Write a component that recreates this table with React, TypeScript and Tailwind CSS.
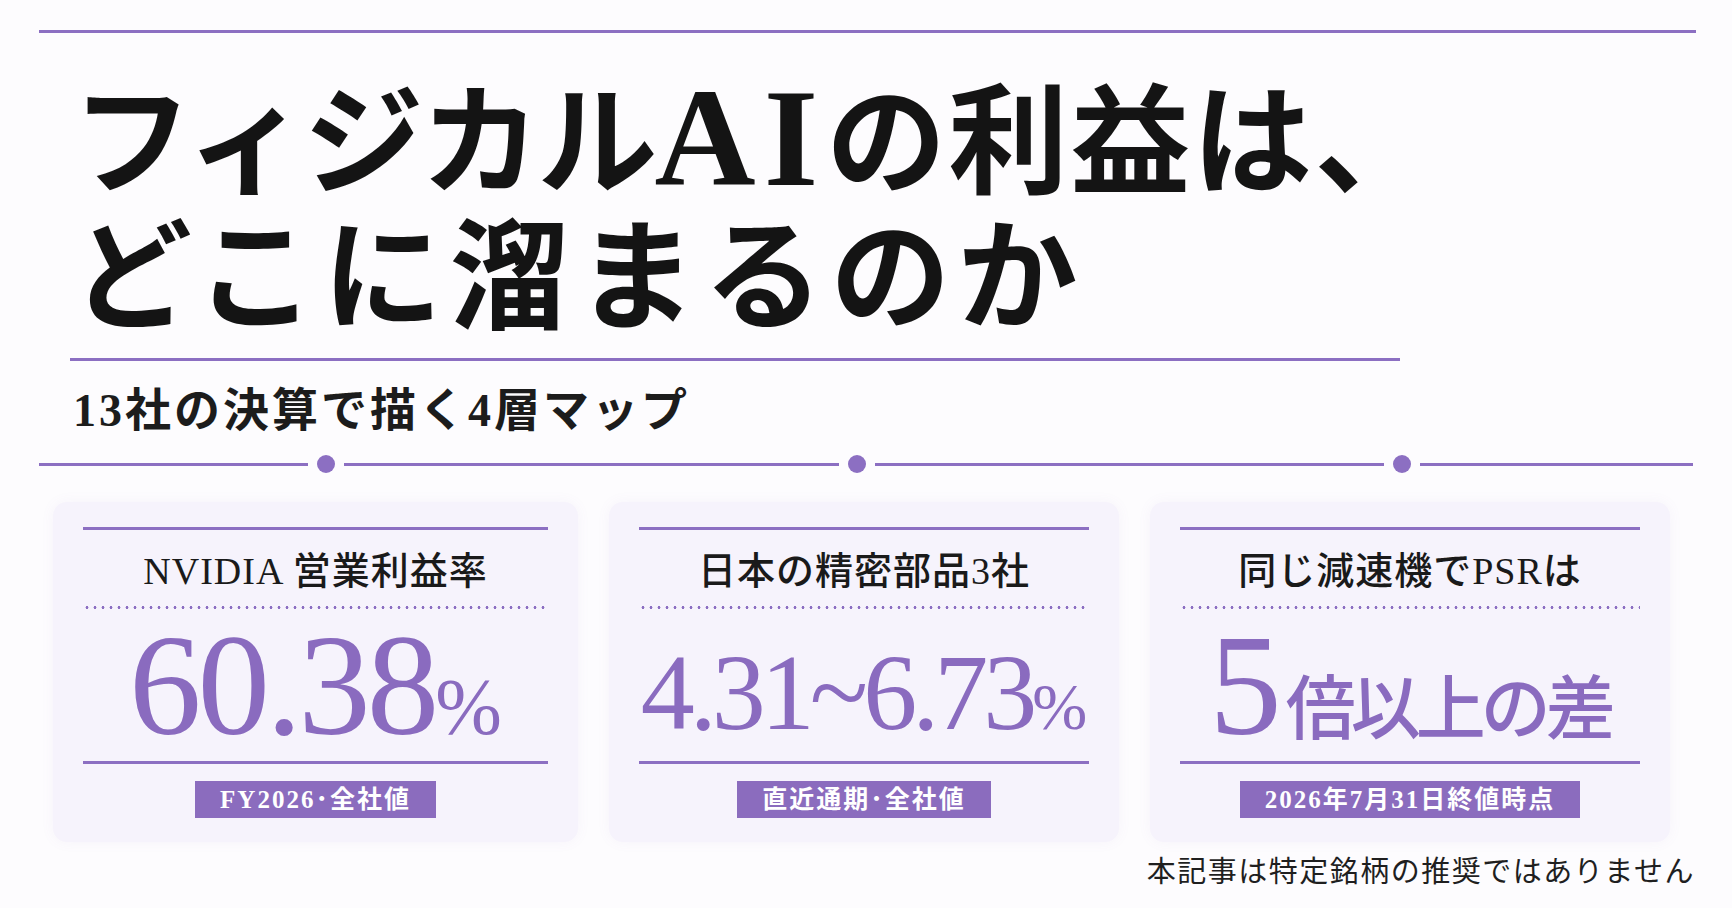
type CardProps = {
  title: React.ReactNode;
  value: React.ReactNode;
  badge: string;
  valueClass: string;
};

function StatCard({ title, value, badge, valueClass }: CardProps) {
  return (
    <div className="flex flex-col rounded-[14px] bg-[#f6f3fc] px-[30px] pb-[24px] pt-[25px] shadow-[0_0_14px_rgba(140,110,195,0.06)]">
      <div className="h-[3px] bg-[#8c6fc2]" />
      <div className="mt-[19px] text-center text-[38px] font-medium leading-[44px] tracking-[1px] text-[#1a1a1a]">
        {title}
      </div>
      <div className="mt-[13px] h-[3px] bg-[radial-gradient(circle,#8c6fc2_1.2px,transparent_1.7px)] bg-[length:8px_3px] bg-repeat-x" />
      <div className={`flex h-[152px] items-center justify-center text-[#8a6bbf] ${valueClass}`}>
        {value}
      </div>
      <div className="h-[3px] bg-[#8c6fc2]" />
      <div className="mt-[17px] flex justify-center">
        <span className="h-[37px] bg-[#8b6cbe] px-[25px] text-[25px] font-bold leading-[37px] tracking-[2px] text-white">
          {badge}
        </span>
      </div>
    </div>
  );
}

export default function App() {
  return (
    <div className="min-h-[908px] w-full overflow-hidden bg-[#fdfcfe] pb-[20px] text-[#141414] [font-family:'Liberation_Serif','Noto_Sans_CJK_JP',serif]">
      <div className="ml-[39px] mt-[30px] h-[3px] w-[1657px] bg-[#8c6fc2]" />

      <h1 className="ml-[72px] mt-[44px] text-[120px] font-bold leading-[135px]">
        <span className="tracking-[-3px]">フィジカル</span>
        <span className="text-[140px] leading-[100px] tracking-[8px]">AI</span>
        <span className="tracking-[2px]">の利益は、</span>
        <br />
        <span className="tracking-[7px]">どこに溜まるのか</span>
      </h1>

      <div className="ml-[70px] mt-[11px] h-[3px] w-[1330px] bg-[#8c6fc2]" />

      <p className="ml-[73px] mt-[22px] text-[46px] font-semibold leading-[56px] tracking-[3px] text-[#1c1c1c]">
        13社の決算で描く4層マップ
      </p>

      <div className="ml-[39px] mt-[16px] flex w-[1654px] items-center gap-[9px]">
        <div className="h-[3px] w-[269px] bg-[#8c6fc2]" />
        <div className="h-[18px] w-[18px] rounded-full bg-[#8c6fc2]" />
        <div className="h-[3px] w-[495px] bg-[#8c6fc2]" />
        <div className="h-[18px] w-[18px] rounded-full bg-[#8c6fc2]" />
        <div className="h-[3px] w-[509px] bg-[#8c6fc2]" />
        <div className="h-[18px] w-[18px] rounded-full bg-[#8c6fc2]" />
        <div className="h-[3px] flex-1 bg-[#8c6fc2]" />
      </div>

      <div className="ml-[53px] mt-[29px] grid grid-cols-[525px_510px_520px] gap-x-[31px]">
        <StatCard
          title="NVIDIA 営業利益率"
          valueClass=""
          value={
            <div className="text-[145px] leading-none tracking-[-4px]">
              60.38<span className="text-[80px] tracking-normal">%</span>
            </div>
          }
          badge="FY2026･全社値"
        />
        <StatCard
          title="日本の精密部品3社"
          valueClass="pt-[16px]"
          value={
            <div className="text-[108px] leading-none tracking-[-5px]">
              4.31~6.73<span className="text-[66px] tracking-normal">%</span>
            </div>
          }
          badge="直近通期･全社値"
        />
        <StatCard
          title="同じ減速機でPSRは"
          valueClass=""
          value={
            <div className="text-[145px] leading-none">
              5<span className="ml-[4px] text-[70px] font-medium tracking-[-5px]">倍以上の差</span>
            </div>
          }
          badge="2026年7月31日終値時点"
        />
      </div>

      <p className="mr-[37px] mt-[12px] text-right text-[29px] leading-[36px] tracking-[1.5px] text-[#1f1f1f]">
        本記事は特定銘柄の推奨ではありません
      </p>
    </div>
  );
}
